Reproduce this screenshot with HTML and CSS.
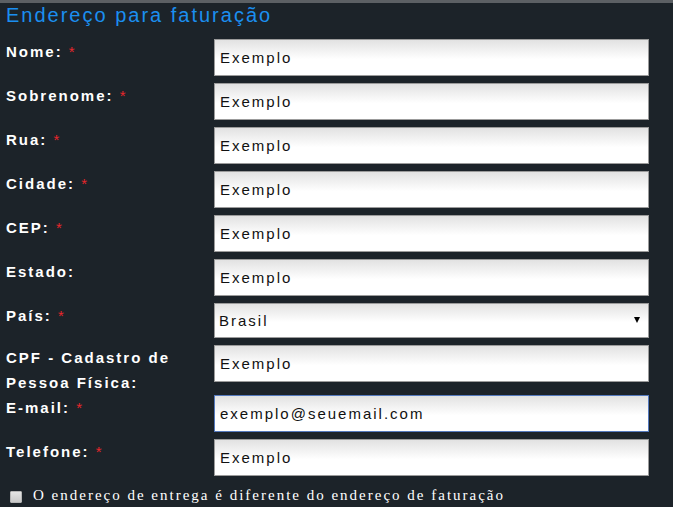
FILE: index.html
```html
<!DOCTYPE html>
<html lang="pt-BR">
<head>
    <meta charset="UTF-8">
    <meta name="viewport" content="width=device-width, initial-scale=1.0">
    <title>Endereço para faturação</title>
    <link rel="stylesheet" href="styles.css">
</head>
<body>

    <div class="billing-panel">
        <h2 class="billing-title">Endereço para faturação</h2>

        <div class="form-row">
            <label class="field-label" for="firstName">Nome: <span class="required">*</span></label>
            <input class="field-input" type="text" id="firstName" value="Exemplo">
        </div>
        <div class="form-row">
            <label class="field-label" for="lastName">Sobrenome: <span class="required">*</span></label>
            <input class="field-input" type="text" id="lastName" value="Exemplo">
        </div>
        <div class="form-row">
            <label class="field-label" for="street">Rua: <span class="required">*</span></label>
            <input class="field-input" type="text" id="street" value="Exemplo">
        </div>
        <div class="form-row">
            <label class="field-label" for="city">Cidade: <span class="required">*</span></label>
            <input class="field-input" type="text" id="city" value="Exemplo">
        </div>
        <div class="form-row">
            <label class="field-label" for="zip">CEP: <span class="required">*</span></label>
            <input class="field-input" type="text" id="zip" value="Exemplo">
        </div>
        <div class="form-row">
            <label class="field-label" for="state">Estado:</label>
            <input class="field-input" type="text" id="state" value="Exemplo">
        </div>
        <div class="form-row">
            <label class="field-label" for="country">País: <span class="required">*</span></label>
            <div class="select-wrap">
                <select class="field-select" id="country">
                    <option selected>Brasil</option>
                    <option>Portugal</option>
                </select>
            </div>
        </div>
        <div class="form-row">
            <label class="field-label" for="cpf">CPF - Cadastro de Pessoa Física:</label>
            <input class="field-input" type="text" id="cpf" value="Exemplo">
        </div>
        <div class="form-row">
            <label class="field-label" for="email">E-mail: <span class="required">*</span></label>
            <input class="field-input is-focused" type="email" id="email" value="exemplo@seuemail.com">
        </div>
        <div class="form-row">
            <label class="field-label" for="phone">Telefone: <span class="required">*</span></label>
            <input class="field-input" type="text" id="phone" value="Exemplo">
        </div>

        <label class="ship-toggle">
            <input class="ship-check" type="checkbox" id="shipDifferent">
            <span>O endereço de entrega é diferente do endereço de faturação</span>
        </label>
    </div>

</body>
</html>
```

FILE: styles.css
```css
/* General Styles */
body {
    margin: 0;
    background-color: #1c2329;
    font-family: 'Liberation Sans', Arial, sans-serif;
    color: #ffffff;
}

/* Panel */
.billing-panel {
    width: 669px;
    min-height: 504px;
    border-top: 3px solid #5c6064;
    border-right: 2px solid #8e9092;
    padding-left: 6px;
    box-sizing: content-box;
    overflow: hidden;
}

.billing-title {
    margin: 0 0 12px 0;
    font-size: 20px;
    line-height: 24px;
    font-weight: normal;
    letter-spacing: 2px;
    color: #1b8ff0;
}

/* Rows */
.form-row {
    display: flex;
    align-items: flex-start;
}

.field-label {
    width: 208px;
    flex-shrink: 0;
    font-size: 15px;
    line-height: 25px;
    font-weight: bold;
    letter-spacing: 2px;
    color: #ffffff;
}

.required {
    color: #e8262b;
    font-weight: normal;
}

.field-input,
.field-select {
    width: 435px;
    height: 37px;
    margin: 0 0 7px 0;
    padding: 0 0 0 5px;
    box-sizing: border-box;
    border: 1px solid #9b9b9b;
    border-radius: 0;
    background: linear-gradient(#e2e2e2, #ffffff 55%);
    font-family: 'Liberation Sans', Arial, sans-serif;
    font-size: 15px;
    letter-spacing: 2px;
    color: #111111;
    outline: none;
}

.field-input.is-focused {
    border-color: #5479bd;
}

/* Select */
.select-wrap {
    position: relative;
}

.field-select {
    height: 35px;
    padding-left: 4px;
    -webkit-appearance: none;
    appearance: none;
}

.select-wrap::after {
    content: '';
    position: absolute;
    right: 9px;
    top: 14px;
    border-left: 3px solid transparent;
    border-right: 3px solid transparent;
    border-top: 6px solid #000000;
}

/* Checkbox */
.ship-toggle {
    display: flex;
    align-items: center;
    height: 24px;
    font-family: 'Liberation Serif', 'Times New Roman', serif;
    font-size: 15px;
    letter-spacing: 2px;
    color: #ffffff;
}

.ship-check {
    -webkit-appearance: none;
    appearance: none;
    width: 12px;
    height: 12px;
    margin: 4px 11px 0 4px;
    border: 1px solid #b5b5b5;
    border-radius: 1px;
    background: linear-gradient(#e4e4e4, #c9c9c9);
}
```
